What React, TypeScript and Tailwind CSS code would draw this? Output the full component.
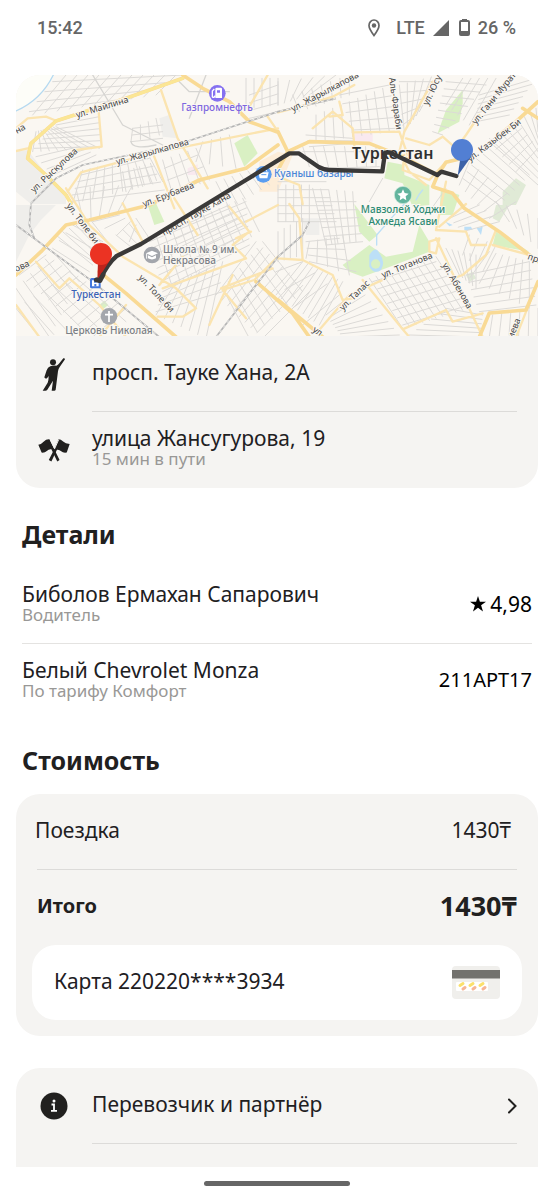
import type { ReactNode } from 'react';

// ─── Map data ─────────────────────────────────
// Geometry is drawn in a 1566 x 783 space and scaled
// down by three; labels are placed in final map units.

type Block = readonly [number, number, number, number, number, number, number, number, number];

// A block of parallel streets: edge A (x1 y1 x2 y2), edge B (x1 y1 x2 y2), count
const BLOCKS: readonly Block[] = [
  [150, 0, 480, 0, 50, 120, 420, 60, 11],
  [110, 20, 40, 110, 500, 0, 340, 70, 4],
  [60, 170, 120, 155, 50, 230, 250, 220, 9],
  [120, 150, 55, 220, 250, 125, 255, 215, 6],
  [60, 245, 110, 300, 190, 215, 240, 240, 4],
  [200, 285, 400, 245, 170, 385, 440, 320, 10],
  [195, 300, 160, 380, 400, 250, 445, 345, 5],
  [320, 290, 420, 260, 330, 350, 440, 310, 7],
  [350, 160, 420, 130, 345, 200, 430, 180, 4],
  [350, 160, 345, 200, 440, 150, 440, 190, 3],
  [560, 200, 640, 180, 540, 260, 660, 280, 4],
  [440, 255, 540, 220, 470, 360, 580, 315, 5],
  [445, 280, 465, 350, 545, 240, 580, 310, 3],
  [600, 320, 720, 280, 640, 400, 760, 330, 6],
  [690, 10, 786, 10, 690, 100, 786, 90, 5],
  [700, 60, 700, 130, 786, 30, 786, 110, 4],
  [786, 20, 960, 0, 786, 90, 880, 60, 6],
  [830, 60, 1000, 0, 850, 110, 1000, 60, 7],
  [900, 120, 1100, 40, 900, 200, 1120, 170, 9],
  [970, 60, 1010, 165, 1120, 30, 1140, 160, 5],
  [1150, 30, 1270, 0, 1165, 170, 1210, 110, 6],
  [1150, 20, 1160, 150, 1260, 20, 1200, 120, 5],
  [860, 215, 1080, 215, 880, 275, 1080, 275, 8],
  [860, 230, 930, 280, 1090, 230, 1090, 275, 2],
  [870, 180, 880, 215, 1010, 190, 1010, 205, 3],
  [1290, 20, 1250, 170, 1410, 30, 1280, 180, 8],
  [1340, 10, 1440, 10, 1290, 90, 1360, 150, 5],
  [1390, 60, 1380, 140, 1560, 10, 1480, 120, 7],
  [1420, 200, 1560, 100, 1566, 330, 1566, 170, 9],
  [1340, 310, 1420, 190, 1450, 390, 1540, 300, 7],
  [1360, 260, 1500, 380, 1330, 330, 1420, 430, 6],
  [1500, 140, 1566, 220, 1420, 200, 1500, 290, 5],
  [1100, 310, 1290, 340, 1060, 380, 1240, 410, 2],
  [786, 330, 880, 330, 786, 440, 880, 440, 5],
  [786, 320, 786, 440, 930, 320, 960, 440, 6],
  [890, 340, 1010, 350, 930, 510, 1020, 500, 6],
  [900, 380, 930, 510, 1020, 380, 1040, 500, 6],
  [180, 340, 350, 330, 200, 430, 300, 420, 5],
  [120, 480, 220, 430, 230, 570, 290, 520, 6],
  [170, 450, 110, 520, 260, 500, 220, 590, 4],
  [310, 420, 360, 450, 230, 440, 340, 500, 4],
  [300, 480, 360, 430, 350, 520, 400, 490, 4],
  [420, 480, 680, 370, 470, 640, 730, 470, 12],
  [400, 500, 440, 640, 690, 380, 700, 510, 8],
  [460, 470, 530, 560, 640, 390, 700, 470, 5],
  [480, 620, 620, 560, 420, 720, 570, 790, 7],
  [440, 650, 420, 710, 600, 570, 620, 650, 4],
  [620, 640, 740, 500, 700, 790, 860, 650, 8],
  [600, 660, 740, 790, 720, 500, 880, 650, 9],
  [10, 600, 230, 786, 90, 540, 330, 700, 11],
  [0, 640, 110, 530, 100, 786, 190, 620, 6],
  [0, 700, 160, 590, 70, 786, 330, 740, 7],
  [786, 470, 860, 430, 786, 560, 860, 540, 5],
  [860, 560, 980, 620, 780, 660, 910, 750, 9],
  [780, 590, 860, 750, 860, 560, 970, 660, 4],
  [880, 500, 980, 480, 870, 550, 1000, 600, 5],
  [870, 500, 880, 560, 970, 490, 1020, 590, 4],
  [1060, 610, 1260, 545, 1160, 760, 1360, 700, 11],
  [1070, 620, 1160, 750, 1260, 560, 1360, 690, 7],
  [1030, 640, 1150, 780, 930, 720, 980, 786, 8],
  [1290, 520, 1380, 540, 1330, 600, 1380, 640, 6],
  [1360, 480, 1440, 510, 1340, 540, 1400, 590, 4],
  [1420, 530, 1540, 560, 1360, 610, 1540, 700, 7],
  [1350, 600, 1390, 710, 1540, 560, 1560, 690, 6],
  [1180, 780, 1290, 700, 1390, 786, 1400, 720, 6],
  [1430, 720, 1566, 700, 1420, 786, 1566, 786, 6],
  [1440, 380, 1566, 430, 1480, 440, 1566, 520, 5],
  [1390, 390, 1450, 440, 1300, 430, 1340, 470, 4],
];

function blockPath([ax, ay, bx, by, cx, cy, dx, dy, n]: Block): string {
  return Array.from({ length: n }, (_, i) => {
    const t = i / (n - 1);
    return `M${ax + (bx - ax) * t} ${ay + (by - ay) * t}L${cx + (dx - cx) * t} ${cy + (dy - cy) * t}`;
  }).join('');
}

const SECONDARY_ROADS = [
  'M0 160L35 130L90 125L115 135', 'M248 110L257 215L180 225', 'M155 350L195 292L420 232L786 160',
  'M435 45L485 190L575 340', 'M412 238L475 400', 'M755 125L786 170', 'M755 0L700 95',
  'M786 112L870 90L950 65L1015 30', 'M0 228L35 220', 'M150 340L220 450L320 545L480 640L540 700L500 725L425 725',
  'M320 385L380 500', 'M475 370L545 480', 'M640 395L700 470L650 510L690 550L440 640', 'M660 490L705 470',
  'M786 545L715 615L620 645L690 730', 'M786 550L860 555L850 430L820 387', 'M860 555L950 600L980 675L1010 670',
  'M770 580L615 640M650 600L580 750', 'M60 560L130 640L160 610L250 690L330 786', 'M330 690L250 786M0 690L70 786',
  'M890 160L950 110L1010 160L1018 240', 'M970 80L980 120L940 125', 'M1010 172L1150 170L1175 240',
  'M1165 170L1250 20', 'M1230 330L1180 290L1150 230L1165 170', 'M1170 190L1240 210L1280 185L1320 220L1350 180L1390 120',
  'M1165 240L1160 285L1240 315L1290 260L1320 255', 'M1290 320L1260 465L1350 470L1365 510L1410 510',
  'M1040 615L1160 763L1290 705L1310 740L1400 715', 'M1160 763L1180 786', 'M1110 610L1000 660L905 770',
  'M1260 490L1400 786', 'M1440 465L1410 540L1340 600L1310 610', 'M1240 500L1270 490L1260 535L1240 530Z',
  'M786 305L850 330L860 387', 'M690 440L786 390', 'M500 545L430 630', 'M380 500L300 545',
  'M1270 455L1350 387', 'M1500 786L1566 620', 'M1430 510L1540 540',
];

const MAIN_ROADS = [
  'M500 10L330 70L120 138L45 205L35 250L90 300L150 360L165 385',
  'M500 0L560 40L640 80L700 140L786 172',
  'M0 600L75 530L150 450L220 435L400 390L550 315L690 280L786 210',
  'M786 170L815 230L880 200L1060 205L1160 245L1265 300L1290 262L1340 250',
  'M1265 300L1250 335L1310 355L1345 400L1450 470L1566 560',
  'M786 285L815 230',
  'M786 675L920 786', 'M1390 786L1420 714L1530 705L1566 620',
  'M1500 140L1566 80M1450 180L1500 140M1520 100L1566 130',
  'M720 620L830 715L880 786', 'M250 590L330 655L480 786',
];

const PARKS = [
  'M655 205L695 180L725 235L685 275Z',
  'M1340 45L1340 85L1330 140L1265 175L1290 105Z',
  'M1115 260L1165 270L1165 300L1240 330L1240 390L1190 395L1160 325L1105 310Z',
  'M1015 387L1085 480L1060 500L1030 470Z',
  'M980 570L1060 510L1110 545L1190 530L1210 450L1240 500L1240 530L1110 580L1040 605L1000 590Z',
  'M1440 470L1540 530L1430 510Z',
  'M395 390L420 385L445 440L415 450Z',
  'M250 690L265 677L277 690L263 701Z',
  'M1275 340L1330 360L1310 420L1270 420Z',
];

const RAILWAY = [
  'M45 385L120 310L200 270L480 210L786 110L960 70',
  'M45 385L40 450L55 490',
  'M0 450L230 620L430 786',
  'M600 786L786 545L860 480L880 440',
];

const ROUTE =
  'M240 615L250 617Q275 565 302 543L375 507L690 315L820 235H848L908 276Q925 285 940 285L1099 289L1107 233L1120 232L1264 300L1276 290L1321 303';

interface StreetLabel {
  text:  string;
  x:     number;
  y:     number;
  angle: number;
}

const STREETS: readonly StreetLabel[] = [
  { text: 'ул. Майлина',       x: 61,  y: 43,  angle: -17 },
  { text: 'ул. Жарылкапова',   x: 101, y: 90,  angle: -16 },
  { text: 'ул. Рыскулова',     x: 18,  y: 118, angle: -43 },
  { text: 'ул. Ерубаева',      x: 128, y: 132, angle: -21 },
  { text: 'на',                x: 1,   y: 59,  angle: -30 },
  { text: 'ова',               x: 0,   y: 197, angle: -24 },
  { text: 'ул. Толе би',       x: 50,  y: 131, angle: 53 },
  { text: 'ул. Толе би',       x: 122, y: 203, angle: 47 },
  { text: 'просп. Тауке Хана', x: 148, y: 161, angle: -30 },
  { text: 'ул. Жарылкапова',   x: 277, y: 37,  angle: -28 },
  { text: 'Аль-Фараби',        x: 373, y: 3,   angle: 82 },
  { text: 'ул. Юсу',           x: 412, y: 31,  angle: -65 },
  { text: 'ул. Гани Муратс',   x: 460, y: 50,  angle: -51 },
  { text: 'ул. Казыбек Би',    x: 454, y: 87,  angle: -37 },
  { text: 'ул. Тоганова',      x: 367, y: 203, angle: -22 },
  { text: 'ул. Талас',         x: 327, y: 236, angle: -45 },
  { text: 'ул. Абенова',       x: 426, y: 190, angle: 60 },
  { text: 'ул',                x: 296, y: 256, angle: 35 },
  { text: 'пр',                x: 511, y: 184, angle: 20 },
  { text: 'иева',              x: 497, y: 264, angle: -68 },
];

function RouteMap() {
  return (
    <svg
      viewBox="0 0 522 261"
      className="block w-full bg-[#faf7f2] font-['Noto_Sans',sans-serif]"
      role="img"
      aria-label="Маршрут поездки"
    >
      <g transform="scale(0.333333)" fill="none" strokeLinecap="round" strokeLinejoin="round">
        <path d="M0 0H115Q75 75 0 108Z" fill="#fdfdf8" />
        <path d="M112 0Q75 75 0 108" stroke="#b5d9f0" strokeWidth="4" />
        <g fill="#efeeeb">
          <path d="M0 230L35 225L100 310L150 350V387H45L0 350Z" />
          <path d="M0 390H120L75 435L40 480L0 560Z" />
          <path d="M430 130L460 120L485 190L440 185Z" />
          <path d="M860 430H910V480H870Z" />
        </g>
        <path d="M730 260L786 230L830 240L786 350L730 350Z" fill="#fdedd8" />
        <path d="M1015 175H1070V200H1015ZM515 280L545 268V300H515Z" fill="#f9e9ef" />
        <g fill="#d9f0c3">
          {PARKS.map(d => <path key={d} d={d} />)}
        </g>
        <path d="M1460 350L1500 310L1530 330L1500 390H1460ZM1440 390H1480L1450 440L1430 430ZM1350 600L1370 590L1380 610L1360 620Z" fill="#e0ead6" />
        <path d="M1060 540Q1080 510 1090 535Q1110 560 1095 585Q1075 600 1060 575Z" fill="#bcdff7" />
        <circle cx="1079" cy="567" r="14" fill="#d9f0c3" />
        <path d="M1082 510V480L1130 425L1165 387M1200 375Q1210 355 1220 345" stroke="#bcdff7" strokeWidth="4" />
        <path d="M1288 440L1310 450L1300 454ZM1345 455H1365L1370 465H1345ZM1382 460L1400 455L1395 480Z" fill="#bcdff7" />

        <path d={BLOCKS.map(blockPath).join('')} stroke="#dcdad7" strokeWidth="3" />
        <path d="M230 0L320 150L440 210M570 0L520 130M345 200Q350 225 420 210M490 20L520 50L640 50" stroke="#d6d5d2" strokeWidth="4" />
        <path d={SECONDARY_ROADS.join('')} stroke="#fbe4b0" strokeWidth="7" />
        <path d={MAIN_ROADS.join('')} stroke="#f9da95" strokeWidth="11" />
        <path d={MAIN_ROADS.slice(0, 1).join('')} stroke="#fbe695" strokeWidth="9" />
        <path d={RAILWAY.join('')} stroke="#b4b4b4" strokeWidth="5" strokeLinecap="butt" />
        <path d={RAILWAY.join('')} stroke="#f2f1ee" strokeWidth="3" strokeDasharray="9 9" strokeLinecap="butt" />
      </g>

      {/* Street names */}
      <g fontSize="9" fill="#454545" stroke="#faf7f2" strokeWidth="2" paintOrder="stroke">
        {STREETS.map(s => (
          <text key={`${s.text}-${s.x}`} transform={`translate(${s.x} ${s.y}) rotate(${s.angle})`}>
            {s.text}
          </text>
        ))}
      </g>

      {/* Places */}
      <g fontSize="10" fontWeight="500" stroke="#faf7f2" strokeWidth="2" paintOrder="stroke">
        <text x="201" y="36" textAnchor="middle" fill="#7d66e0">Газпромнефть</text>
        <text x="258" y="102" fill="#4a86d8">Куаныш базары</text>
        <text x="80" y="223" textAnchor="middle" fill="#3a62b5">Туркестан</text>
        <text x="147" y="178" fill="#7b7f86">Школа № 9 им.</text>
        <text x="147" y="189" fill="#7b7f86">Некрасова</text>
        <text x="93" y="259" textAnchor="middle" fill="#7b7f86">Церковь Николая</text>
        <text x="387" y="138" textAnchor="middle" fill="#2f8b74">Мавзолей Ходжи</text>
        <text x="387" y="150" textAnchor="middle" fill="#2f8b74">Ахмеда Ясави</text>
      </g>
      <text x="336" y="84" fontSize="16" fontWeight="600" fill="#303030" stroke="#faf7f2" strokeWidth="2" paintOrder="stroke">
        Туркестан
      </text>

      <g transform="scale(0.333333)">
        {/* Gas station */}
        <circle cx="604" cy="55" r="25" fill="#8571f0" />
        <path d="M598 42Q598 38 602 38H614Q618 38 618 42V69H598Z" fill="#fff" />
        <path d="M603 46H612V53H603Z" fill="#8571f0" />
        <path d="M598 62Q594 70 589 65V48L595 42" fill="none" stroke="#fff" strokeWidth="4" />
        {/* Market */}
        <circle cx="742" cy="298" r="25" fill="#5a9df0" />
        <path d="M727 292H758L754 310H731Z" fill="#fff" />
        <path d="M733 290L739 282H748L753 290M735 299H750" fill="none" stroke="#fff" strokeWidth="3" />
        <path d="M736 299H751" stroke="#5a9df0" strokeWidth="3" />
        {/* School */}
        <circle cx="408" cy="540" r="25" fill="#a3a6ac" />
        <path d="M390 535L408 527L426 535L408 543ZM396 541L408 547L420 541V550Q408 557 396 550Z" fill="#fff" />
        <path d="M392 536V551" stroke="#fff" strokeWidth="3" />
        {/* Church */}
        <circle cx="279" cy="724" r="25" fill="#a3a6ac" />
        <path d="M279 708V741M267 719H291" stroke="#fff" strokeWidth="5" />
        {/* Railway station */}
        <rect x="222" y="609" width="32" height="31" rx="5" fill="#4377dd" />
        <path d="M228 616H234V623H242V616H248V634H228Z" fill="#fff" />
        <path d="M235 627H241V634H235Z" fill="#4377dd" />
        {/* Mausoleum */}
        <circle cx="1161" cy="360" r="26" fill="#62b49d" stroke="#d5ebdf" strokeWidth="2" />
        <path d="M1161 343L1166 354L1178 356L1169 364L1171 376L1161 370L1151 376L1153 364L1144 356L1156 354Z" fill="#fff" />

        <path d={ROUTE} fill="none" stroke="#3a3938" strokeWidth="13" strokeLinecap="round" strokeLinejoin="round" />

        <path d="M246 560L244 615L281 557Z" fill="#bd241c" />
        <circle cx="255" cy="537" r="33" fill="#eb3323" />
        <path d="M1333 250L1325 302L1367 243Z" fill="#3c62a8" />
        <circle cx="1338" cy="225" r="33" fill="#527fd3" />
        <path d="M243 614L252 617L262 598" fill="none" stroke="#3a3938" strokeWidth="14" strokeLinecap="round" strokeLinejoin="round" />
      </g>
    </svg>
  );
}

// ─── Icons ────────────────────────────────────

function PersonIcon() {
  return (
    <svg viewBox="27 14 72 102" className="h-[34px] w-6" fill="#21201f">
      <circle cx="60" cy="30" r="9" />
      <path d="M91 18Q95 16 96 21L80 44Q76 49 75 57L68 112Q67 115 64 115H56L60 85L43 112Q41 115 37 115H29L44 91Q47 84 47 71L42 78Q36 80 34 75L41 54Q44 45 52 42Q58 39 70 40Q75 38 79 33Z" />
    </svg>
  );
}

function FlagsIcon() {
  return (
    <svg viewBox="11 254 98 72" className="h-6 w-8" fill="#21201f">
      <path d="M12 274Q22 272 29 264Q36 256 46 257L77 321L70 325L52 288Q44 287 38 293Q32 299 22 298Z" />
      <path d="M74 257Q81 257 88 264Q95 271 108 272L99 298Q88 300 82 294Q77 288 69 289L52 325L44 321L60 289Z" />
      <path d="M49 259L62 286L74 259" fill="none" stroke="#f5f4f2" strokeWidth="3" />
    </svg>
  );
}

function InfoIcon() {
  return (
    <svg viewBox="0 0 28 28" className="size-7">
      <circle cx="14" cy="14" r="13.5" fill="#21201f" />
      <circle cx="14" cy="9" r="1.5" fill="#fff" />
      <path d="M11.5 12.5H14V18.5M11 18.8H17" fill="none" stroke="#fff" strokeWidth="1.8" />
    </svg>
  );
}

function BankCardIcon() {
  return (
    <svg viewBox="0 0 48 33" className="h-[33px] w-12">
      <rect width="48" height="33" rx="4" fill="#f0efec" />
      <path d="M0 4H48V12.500H0Z" fill="#73726e" />
      <rect x="4" y="16" width="32" height="9" rx="1" fill="#fff" />
      <g strokeWidth="3" strokeLinecap="round">
        <path d="M8 19.500L11 17.500M18 19.500L21 17.500M28 19.500L31 17.500" stroke="#fbe06b" />
        <path d="M11 23L13 21.500M21 23L23 21.500M31 23L33 21.500" stroke="#f5b596" />
      </g>
    </svg>
  );
}

// ─── Building blocks ──────────────────────────

interface RowTextProps {
  title:     string;
  subtitle?: string;
}

function RowText({ title, subtitle }: RowTextProps) {
  return (
    <div className="min-w-0 pb-1 text-left">
      <p className="text-[21px] leading-[22px]">{title}</p>
      {subtitle && <p className="text-[17px] leading-5 text-[#999896]">{subtitle}</p>}
    </div>
  );
}

interface IconRowProps extends RowTextProps {
  icon:     ReactNode;
  divider?: boolean;
}

function IconRow({ icon, title, subtitle, divider }: IconRowProps) {
  return (
    <div className="flex pr-[21px]">
      <div className="flex w-[76px] shrink-0 items-center justify-center">{icon}</div>
      <div className={`flex h-19 flex-1 items-center ${divider ? 'border-b border-[#dcdbd9]' : ''}`}>
        <RowText title={title} subtitle={subtitle} />
      </div>
    </div>
  );
}

function StatusBar() {
  return (
    <header className="flex h-[55px] shrink-0 items-center justify-between pr-[38px] pl-[37px] font-['Roboto',sans-serif] text-lg font-medium text-[#666]">
      <span>15:42</span>
      <div className="flex items-center">
        <svg viewBox="0 0 12 18" className="mr-4 h-[18px] w-3" fill="none">
          <path d="M6 16.500C3 12.500 1 9.500 1 6.500A5 5.500 0 0 1 11 6.500C11 9.500 9 12.500 6 16.500Z" stroke="#666" strokeWidth="1.700" />
          <circle cx="6" cy="6.500" r="2.200" fill="#666" />
        </svg>
        <span>LTE</span>
        <svg viewBox="0 0 16 16" className="mr-2.5 ml-2 size-4" fill="#666">
          <path d="M16 0V16H0Z" />
        </svg>
        <svg viewBox="0 0 11 17" className="mr-2 h-[17px] w-[11px]" fill="none">
          <path d="M3 0H8V2H3Z" fill="#666" />
          <rect x="1" y="2" width="9" height="14" rx="1" stroke="#666" strokeWidth="2" />
          <path d="M1 12H10V16H1Z" fill="#666" />
        </svg>
        <span>26 %</span>
      </div>
    </header>
  );
}

// ─── Screen ───────────────────────────────────

export default function App() {
  return (
    <div className="flex h-screen flex-col bg-white font-['Noto_Sans',sans-serif] text-[#21201f]">
      <StatusBar />

      <main className="min-h-0 flex-1 overflow-hidden px-4 pt-5">
        <section className="overflow-hidden rounded-3xl bg-[#f5f4f2]">
          <RouteMap />
          <IconRow icon={<PersonIcon />} title="просп. Тауке Хана, 2А" divider />
          <IconRow icon={<FlagsIcon />} title="улица Жансугурова, 19" subtitle="15 мин в пути" />
        </section>

        <section className="px-1.5 pt-[26px]">
          <h2 className="text-[25px] leading-10 font-bold">Детали</h2>
          <div className="mt-3.5 flex h-19 items-center justify-between border-b border-[#e4e3e1]">
            <RowText title="Биболов Ермахан Сапарович" subtitle="Водитель" />
            <div className="flex items-center gap-1 pb-1 text-[21px] leading-6 text-black">
              <svg viewBox="0 0 16 16" className="size-4" fill="currentColor">
                <path d="M8 0L9.900 5.700H16L11.100 9.300L13 15.500L8 11.700L3 15.500L4.900 9.300L0 5.700H6.100Z" />
              </svg>
              <span>4,98</span>
            </div>
          </div>
          <div className="flex h-19 items-center justify-between">
            <RowText title="Белый Chevrolet Monza" subtitle="По тарифу Комфорт" />
            <span className="pb-1 text-xl leading-6 text-black">211АРТ17</span>
          </div>
        </section>

        <section className="pt-5">
          <h2 className="px-1.5 text-[25px] leading-10 font-bold">Стоимость</h2>
          <div className="mt-3.5 rounded-3xl bg-[#f5f4f2] px-4 pb-4">
            <div className="flex h-[75px] items-center justify-between pr-[11px] pb-1 pl-[3px] text-[21px] leading-6">
              <span>Поездка</span>
              <span>1430₸</span>
            </div>
            <hr className="mx-[5px] border-[#dcdbd9]" />
            <div className="flex h-[75px] items-center justify-between px-[5px] pb-1 font-bold">
              <span className="text-xl leading-6">Итого</span>
              <span className="text-[27px] leading-10">1430₸</span>
            </div>
            <button
              type="button"
              className="flex h-[75px] w-full items-center justify-between rounded-3xl bg-white px-[22px]"
            >
              <RowText title="Карта 220220****3934" />
              <BankCardIcon />
            </button>
          </div>
        </section>

        <section className="mt-8 rounded-t-3xl bg-[#f5f4f2] pr-[21px] pb-16">
          <button type="button" className="flex w-full">
            <span className="flex h-19 w-[76px] shrink-0 items-center justify-center">
              <InfoIcon />
            </span>
            <span className="flex h-19 flex-1 items-center justify-between border-b border-[#dcdbd9]">
              <RowText title="Перевозчик и партнёр" />
              <svg viewBox="0 0 10 16" className="h-4 w-2.5" fill="none">
                <path d="M2 1.500L8.500 8L2 14.500" stroke="#21201f" strokeWidth="2" strokeLinecap="round" />
              </svg>
            </span>
          </button>
        </section>
      </main>

      <footer className="flex h-[33px] shrink-0 items-center justify-center">
        <div className="h-[5px] w-[146px] rounded-full bg-[#666]" />
      </footer>
    </div>
  );
}
